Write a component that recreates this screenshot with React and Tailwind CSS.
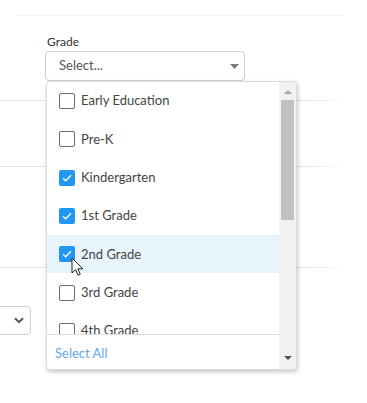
import React from "react";

const grades = [
  { name: "Early Education", checked: false },
  { name: "Pre-K", checked: false },
  { name: "Kindergarten", checked: true },
  { name: "1st Grade", checked: true },
  { name: "2nd Grade", checked: true, hover: true },
  { name: "3rd Grade", checked: false },
  { name: "4th Grade", checked: false },
];

const Line = () => (
  <div className="w-[352px] h-px bg-gradient-to-r from-[#e4e4e4] from-85% to-transparent" />
);

const CheckBox = ({ checked }) =>
  checked ? (
    <span className="flex items-center justify-center w-4 h-4 rounded-[2px] bg-[#2196f3]">
      <svg width="10" height="8" viewBox="0 0 10 8">
        <path d="M1 4.2 3.7 6.8 9 1.2" fill="none" stroke="#fff" strokeWidth="1.3" />
      </svg>
    </span>
  ) : (
    <span className="w-4 h-4 rounded-[2px] border border-[#6b6b6b] bg-white" />
  );

const App = () => {
  return (
    <div
      className="relative w-[367px] h-[403px] bg-white overflow-hidden text-[#444]"
      style={{ fontFamily: "Lato, 'Open Sans', sans-serif" }}
    >
      <div className="h-[15px]" />
      <div className="ml-[15px] w-[330px] h-px bg-[#f7f7f7]" />
      <div className="pl-[45px] pt-[19px]">
        <div className="text-[12px] leading-[14px] text-[#333] pl-[2px]">Grade</div>
        <div className="mt-[2px] w-[200px] h-[30px] border border-[#cfcfcf] rounded-[4px] flex items-center justify-between pl-[13px] pr-[5px]">
          <span className="text-[13px] text-[#555]">Select...</span>
          <svg width="9" height="5" viewBox="0 0 9 5">
            <path d="M0 0h9L4.5 5z" fill="#7a7a7a" />
          </svg>
        </div>
      </div>
      <div className="mt-[19px]">
        <Line />
      </div>
      <div className="mt-[65px]">
        <Line />
      </div>
      <div className="mt-[100px]">
        <Line />
      </div>
      <div className="mt-[38px] ml-[-170px] w-[201px] h-[29px] border border-[#cfcfcf] rounded-[4px] flex items-center justify-end pr-[6px]">
        <svg width="10" height="7" viewBox="0 0 10 7">
          <path d="M1 1.2 5 5.2 9 1.2" fill="none" stroke="#555" strokeWidth="2" />
        </svg>
      </div>

      <div className="absolute left-[46px] top-[81px] w-[251px] h-[289px] bg-white border border-[#dcdcdc] rounded-[4px] shadow-[1px_2px_4px_rgba(0,0,0,0.22)] flex overflow-hidden">
        <div className="flex-1 flex flex-col">
          <div className="h-[252px] overflow-hidden">
            {grades.map((g) => (
              <div
                key={g.name}
                className={`h-[38.3px] flex items-center pl-[12px] gap-[6px] text-[13px] ${
                  g.hover ? "bg-[#e8f4fc]" : ""
                }`}
              >
                <CheckBox checked={g.checked} />
                <span>{g.name}</span>
              </div>
            ))}
          </div>
          <div className="flex-1 border-t border-[#dedede] flex items-center pl-[8px] pt-[3px] text-[13px] text-[#64a9f0]">
            Select All
          </div>
        </div>
        <div className="w-[17px] bg-[#f1f1f1] flex flex-col items-center">
          <svg className="mt-[8px]" width="8" height="4" viewBox="0 0 8 4">
            <path d="M0 4h8L4 0z" fill="#a8a8a8" />
          </svg>
          <div className="mt-[6px] w-[13px] h-[120px] bg-[#c1c1c1]" />
          <div className="flex-1" />
          <svg className="mb-[9px]" width="8" height="4" viewBox="0 0 8 4">
            <path d="M0 0h8L4 4z" fill="#505050" />
          </svg>
        </div>
      </div>

      <svg className="absolute left-[71px] top-[257px]" width="13" height="20" viewBox="0 0 13 20">
        <path
          d="M1 1v15l3.6-3.4 2.4 5.6 2.3-1-2.4-5.4h5z"
          fill="#fff"
          stroke="#222"
          strokeWidth="1"
          strokeLinejoin="round"
        />
      </svg>
    </div>
  );
};

export default App;
